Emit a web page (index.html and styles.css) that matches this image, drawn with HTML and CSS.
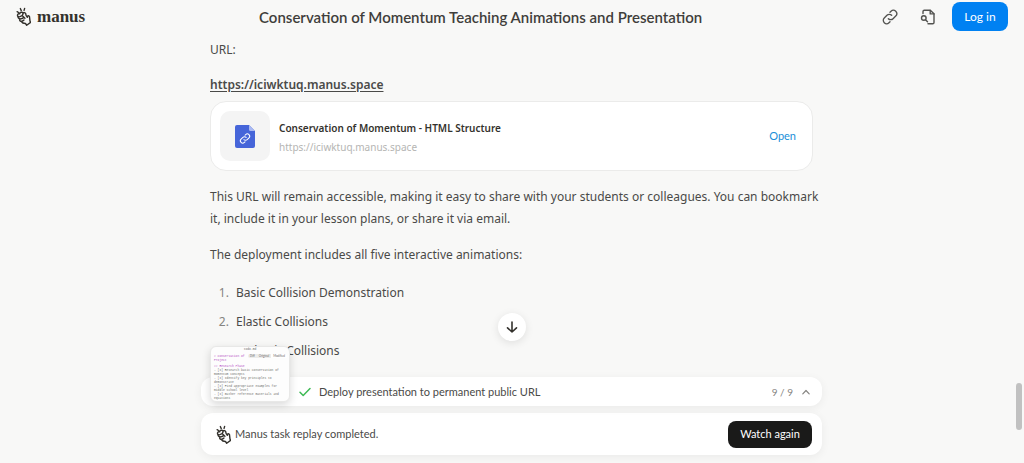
FILE: index.html
```
<!DOCTYPE html>
<html lang="en">

<head>
    <meta charset="UTF-8">
    <meta name="viewport" content="width=device-width, initial-scale=1.0">
    <title>Conservation of Momentum Teaching Animations and Presentation - Manus</title>
    <link rel="stylesheet" href="styles.css">
</head>

<body>
    <!-- shared hand logo -->
    <svg class="sprite" aria-hidden="true">
        <symbol id="hand" viewBox="0 0 16 20">
            <g fill="none" stroke="currentColor" stroke-width="1.5" stroke-linecap="round" stroke-linejoin="round">
                <path d="M1.200 4.800l1.900 1.200M4.600 1.500l1 2.200M9.200 1.300l-.6 2.200" />
                <path d="M2.300 10.200C.8 8.600 2 6.600 3.900 7.200 4.200 5.300 6.500 4.800 7.500 6.200c1.300-1 3.300 0 3 1.900.2 1.200.9 1.900 1.600 2.700l.3-1.300c.8-.8 2-.2 2 .9l.5 4.300 .7 1.600-4.200 3-1.300-1.800c-2 0-3.700-.8-4.600-2.300-1.500-.2-2-1.700-1.200-2.700-1.500-.3-2.300-1.300-2-2.300z" />
                <path d="M2.300 10.200c1.500.5 3-.2 4.200-1.200M4.300 12.500c1.300.2 2.500-.2 3.500-1M5.500 15.200c1.200 0 2.200-.6 3-1.400M7.500 6.200c.2 1.200 0 1.900-1 2.800l3 2.800" />
            </g>
        </symbol>
    </svg>

    <header class="header">
        <a href="#" class="brand">
            <svg class="hand"><use href="#hand" /></svg>
            <span>manus</span>
        </a>
        <h1 class="title">Conservation of Momentum Teaching Animations and Presentation</h1>
        <div class="actions">
            <button class="icon_btn" aria-label="Copy link">
                <svg width="16" height="16" viewBox="0 0 24 24" fill="none" stroke="currentColor" stroke-width="2" stroke-linecap="round" stroke-linejoin="round">
                    <path d="M9.500 14.500a5 5 0 0 0 7.100 0l4-4a5 5 0 0 0-7.100-7.100l-1.500 1.500" />
                    <path d="M14.500 9.500a5 5 0 0 0-7.100 0l-4 4a5 5 0 0 0 7.100 7.100l1.500-1.500" />
                </svg>
            </button>
            <button class="icon_btn" aria-label="View files">
                <svg width="16" height="16" viewBox="0 0 16 16" fill="none" stroke="currentColor" stroke-width="1.400" stroke-linecap="round" stroke-linejoin="round">
                    <path d="M3 4.500V2.500a1.300 1.300 0 0 1 1.300-1.300h6L14 4.800v8.700a1.300 1.300 0 0 1-1.300 1.300H8" />
                    <path d="M10.200 1.400v3.500H14" />
                    <circle cx="3.800" cy="9" r="2.300" />
                    <path d="M5.500 10.700l2 2.100" />
                </svg>
            </button>
            <button class="login">Log in</button>
        </div>
    </header>

    <main class="chat">
        <p>URL:</p>
        <p class="link"><a href="#" class="url">https://iciwktuq.manus.space</a></p>

        <div class="card">
            <div class="card_icon">
                <svg width="20" height="23" viewBox="0 0 20 23">
                    <path d="M2 0h12l6 6v15a2 2 0 0 1-2 2H2a2 2 0 0 1-2-2V2a2 2 0 0 1 2-2z" fill="#4665d9" />
                    <path d="M14 0l6 6h-4.500A1.500 1.500 0 0 1 14 4.500z" fill="#a9b9f2" />
                    <g transform="translate(4.500 8) scale(.46)" fill="none" stroke="#fff" stroke-width="2.200" stroke-linecap="round">
                        <path d="M9.500 14.500a5 5 0 0 0 7.100 0l4-4a5 5 0 0 0-7.100-7.100l-1.500 1.500" />
                        <path d="M14.500 9.500a5 5 0 0 0-7.100 0l-4 4a5 5 0 0 0 7.100 7.100l1.500-1.500" />
                    </g>
                </svg>
            </div>
            <div class="card_text">
                <h2>Conservation of Momentum - HTML Structure</h2>
                <span>https://iciwktuq.manus.space</span>
            </div>
            <a href="#" class="open">Open</a>
        </div>

        <p class="wide">This URL will remain accessible, making it easy to share with your students or colleagues. You can bookmark it, include it in your lesson plans, or share it via email.</p>
        <p>The deployment includes all five interactive animations:</p>
        <ol class="list">
            <li>Basic Collision Demonstration</li>
            <li>Elastic Collisions</li>
            <li>Inelastic Collisions</li>
        </ol>
    </main>

    <footer class="dock">
        <button class="scroll_down" aria-label="Scroll to bottom">
            <svg width="14" height="14" viewBox="0 0 14 14" fill="none" stroke="currentColor" stroke-width="1.600" stroke-linecap="round" stroke-linejoin="round">
                <path d="M7 2v10M2.500 7.800L7 12l4.500-4.200" />
            </svg>
        </button>

        <div class="task">
            <div class="preview">
                <div class="preview_name">todo.md</div>
                <div class="preview_tabs"><span>Diff</span><span>Original</span><span class="active">Modified</span></div>
                <div class="preview_code">
                    <b># Conservation of<br>Project</b>
                    <b class="gap">## Research Phase</b>
                    <p>- [x] Research basic conservation of<br>momentum concepts</p>
                    <p>- [x] Identify key principles to<br>demonstrate</p>
                    <p>- [x] Find appropriate examples for<br>middle school level</p>
                    <p>- [x] Gather reference materials and<br>equations</p>
                </div>
            </div>
            <svg class="check" width="12" height="10" viewBox="0 0 12 10" fill="none" stroke="currentColor" stroke-width="1.500" stroke-linecap="round" stroke-linejoin="round">
                <path d="M1 5.200l3.200 3.300L11 1.500" />
            </svg>
            <span class="task_name">Deploy presentation to permanent public URL</span>
            <span class="count">9 / 9</span>
            <button class="toggle" aria-label="Expand steps">
                <svg width="8" height="6" viewBox="0 0 8 6" fill="none" stroke="currentColor" stroke-width="1.200" stroke-linecap="round" stroke-linejoin="round">
                    <path d="M.8 4.800L4 1.500l3.200 3.300" />
                </svg>
            </button>
        </div>

        <div class="replay">
            <svg class="hand"><use href="#hand" /></svg>
            <span>Manus task replay completed.</span>
            <button class="watch">Watch again</button>
        </div>
    </footer>

    <div class="scrollbar"></div>
</body>

</html>
```
FILE: styles.css
```
* {
    box-sizing: border-box;
}

body {
    display: flex;
    flex-direction: column;
    height: 100vh;
    margin: 0;
    padding-right: 1px;
    overflow: hidden;
    background: #f8f8f7;
    color: #4a4a48;
    font-family: "Noto Sans", sans-serif;
    font-size: 12px;
    line-height: 22px;
}

h1,
h2,
p {
    margin: 0;
}

button {
    padding: 0;
    border: 0;
    background: none;
    color: inherit;
    font: inherit;
    cursor: pointer;
}

a {
    color: inherit;
    text-decoration: none;
}

svg {
    display: block;
    flex: none;
}

.sprite {
    position: absolute;
    width: 0;
    height: 0;
}

.hand {
    width: 15px;
    height: 19px;
    color: #34322d;
}

/* header */
.header {
    display: flex;
    align-items: center;
    justify-content: space-between;
    flex: none;
    height: 33px;
    padding: 0 15px 0 16px;
    font-family: Lato, sans-serif;
}

.brand {
    display: flex;
    align-items: center;
    gap: 6px;
    color: #34322d;
    font-family: "Liberation Serif", serif;
    font-size: 17px;
    font-weight: bold;
}

.title {
    color: #3f3e3b;
    font-size: 15px;
    font-weight: 600;
}

.actions {
    display: flex;
    align-items: center;
    gap: 10px;
}

.icon_btn {
    padding: 6px;
    color: #535350;
}

.login {
    width: 56px;
    height: 29px;
    border-radius: 8px;
    background: #0081f2;
    color: #fff;
}

/* conversation */
.chat {
    flex: 1;
    min-height: 0;
    width: 100%;
    max-width: 603px;
    margin: 0 auto;
    padding-top: 6px;
}

.chat > p {
    margin-bottom: 14px;
}

.chat > .link {
    margin: -1px 0 5px;
}

.chat > .wide {
    margin-right: -10px;
}

.url {
    font-weight: 600;
    text-decoration: underline;
    text-underline-offset: 2px;
}

.card {
    display: flex;
    align-items: center;
    gap: 9px;
    margin-bottom: 15px;
    padding: 9px 16px 9px 9px;
    border: 1px solid #ebebea;
    border-radius: 16px;
    background: #fff;
}

.card_icon {
    display: flex;
    align-items: center;
    justify-content: center;
    width: 50px;
    height: 50px;
    border-radius: 10px;
    background: #f4f4f4;
}

.card_text {
    flex: 1;
    padding-top: 4px;
    color: #b5b5b3;
    font-size: 10px;
    line-height: 19px;
}

.card_text h2 {
    color: #34322d;
    font-size: 10px;
    font-weight: 600;
}

.open {
    color: #1a8fd8;
    font-family: Lato, sans-serif;
    font-size: 11px;
}

.list {
    margin: 0;
    padding: 2px 0 0 22px;
}

.list li {
    margin-bottom: 7px;
    padding-left: 4px;
}

.list li::marker {
    color: #858481;
}

/* bottom dock */
.dock {
    position: relative;
    display: flex;
    flex: none;
    flex-direction: column;
    gap: 7px;
    width: 100%;
    max-width: 621px;
    margin: 0 auto;
    padding-bottom: 8px;
    font-family: Lato, sans-serif;
}

.scroll_down {
    position: absolute;
    bottom: 122px;
    left: 50%;
    display: flex;
    align-items: center;
    justify-content: center;
    width: 28px;
    height: 28px;
    border-radius: 50%;
    background: #fff;
    box-shadow: 0 2px 8px rgba(0, 0, 0, .1);
    color: #34322d;
    transform: translateX(-50%);
}

.task,
.replay {
    display: flex;
    align-items: center;
    border-radius: 12px;
    background: #fff;
    box-shadow: 0 2px 10px rgba(0, 0, 0, .06);
    font-size: 11px;
}

.task {
    position: relative;
    height: 29px;
    padding: 0 12px 0 98px;
}

.check {
    color: #3fba55;
}

.task_name {
    flex: 1;
    margin-left: 8px;
}

.count {
    color: #858481;
    font-size: 10px;
}

.toggle {
    margin-left: 9px;
    color: #858481;
}

.replay {
    gap: 4px;
    height: 42px;
    padding: 0 10px 0 15px;
}

.watch {
    width: 84px;
    height: 27px;
    margin-left: auto;
    border-radius: 8px;
    background: #1a1a19;
    color: #fff;
}

/* file preview on top of the task bar */
.preview {
    position: absolute;
    bottom: 4px;
    left: 9px;
    width: 80px;
    height: 56px;
    overflow: hidden;
    border: 1px solid #e8e8e7;
    border-radius: 6px;
    background: #fdfdfd;
    box-shadow: 0 3px 8px rgba(0, 0, 0, .15);
    color: #6d6d6b;
    font-family: "Liberation Mono", monospace;
    font-size: 3px;
    line-height: 4px;
}

.preview_name {
    padding: 1px 0 3px;
    text-align: center;
}

.preview_tabs {
    position: absolute;
    top: 7px;
    right: 2px;
    display: flex;
    background: #ececeb;
    border-radius: 2px;
    font-family: Lato, sans-serif;
}

.preview_tabs span {
    padding: 0 2px;
}

.preview_tabs .active {
    background: #fff;
}

.preview_code {
    padding: 0 3px;
}

.preview_code b {
    display: block;
    color: #b44cc4;
    font-weight: normal;
}

.preview_code .gap {
    margin-top: 2px;
}

/* page scrollbar thumb */
.scrollbar {
    position: absolute;
    right: 2px;
    bottom: 33px;
    width: 6px;
    height: 47px;
    border-radius: 3px;
    background: #c1c1c1;
}
```
